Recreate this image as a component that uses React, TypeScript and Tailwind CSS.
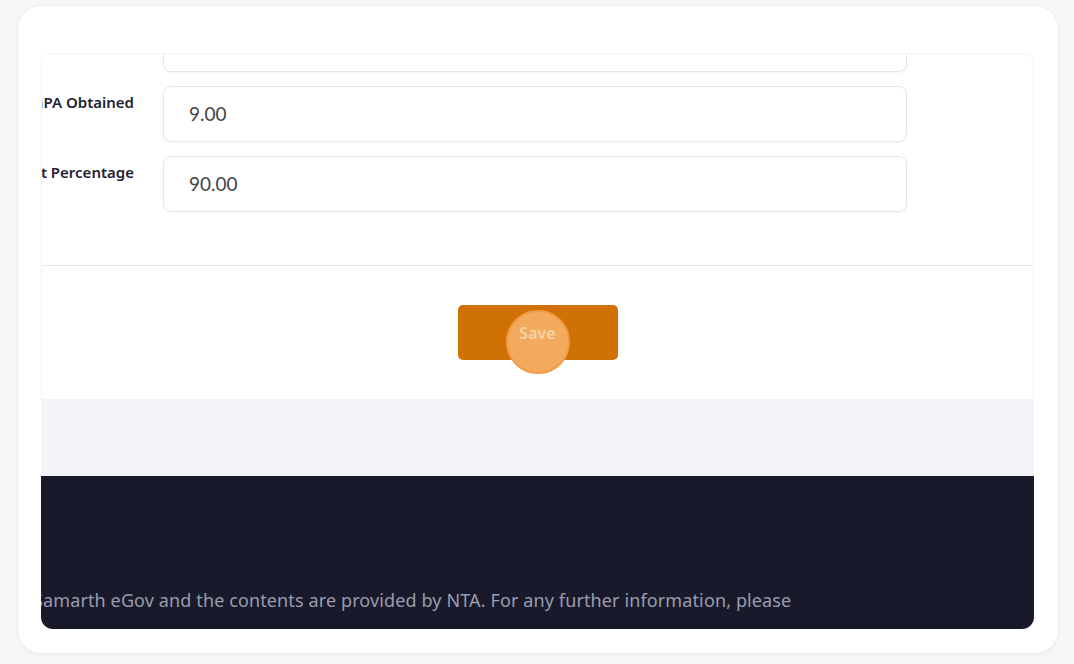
import React from "react";

type Field = {
  label: string;
  value: string;
};

const fields: Field[] = [
  { label: "Result Status", value: "" },
  { label: "CGPA Obtained", value: "9.00" },
  { label: "Equivalent Percentage", value: "90.00" },
];

export default function App() {
  return (
    <div className="h-[664px] w-full bg-[#f5f6f8] pl-[17px] pr-[15px] pt-[5px] pb-[10px] font-['Noto_Sans',sans-serif]">
      <div className="flex h-full flex-col rounded-[24px] border border-[#eceef1] bg-white pt-[47px] pb-[24px] pl-[23px] pr-[24px] shadow-[0_1px_2px_rgba(0,0,0,0.04)]">
        <div className="flex flex-1 flex-col overflow-hidden rounded-t-[10px] rounded-b-[12px]">
          {/* form card */}
          <div className="flex h-[347px] flex-col overflow-hidden rounded-t-[10px] border border-[#f1f2f4] bg-white shadow-[0_2px_3px_rgba(0,0,0,0.05)]">
            <div className="-mt-[38px] flex flex-col gap-[14px]">
              {fields.map((f) => (
                <div key={f.label} className="flex items-start">
                  <div className="flex w-[92px] shrink-0 justify-end pt-[5px]">
                    <span className="whitespace-nowrap text-[15px] font-semibold text-[#1f2230]">
                      {f.label}
                    </span>
                  </div>
                  <div className="ml-[29px] flex h-[56px] w-[744px] items-center rounded-[8px] border border-[#e6e7ea] bg-white px-[25px] shadow-[0_1px_2px_rgba(0,0,0,0.04)]">
                    <span className="font-['Lato',sans-serif] text-[19px] text-[#444444]">
                      {f.value}
                    </span>
                  </div>
                </div>
              ))}
            </div>
            <div className="mt-[53px] border-t border-[#e8e9ec]" />
            <div className="flex justify-center pt-[39px]">
              <button className="relative flex h-[55px] w-[160px] items-start justify-center rounded-[5px] bg-[#cf7104] pt-[16px] text-[16px] font-semibold text-[#f8d2a6]">
                <span className="absolute left-1/2 top-[5px] h-[64px] w-[64px] -translate-x-1/2 rounded-full border-2 border-[#f39a44] bg-[#f2aa5e]" />
                <span className="relative">Save</span>
              </button>
            </div>
          </div>
          {/* gray band */}
          <div className="h-[76px] shrink-0 bg-[#f3f4f8]" />
          {/* footer */}
          <div className="flex flex-1 items-end bg-[#181a2b] pb-[15px]">
            <p className="-ml-[8px] whitespace-nowrap text-[18px] tracking-[0.12px] text-[#9a9cae]">
              Samarth eGov and the contents are provided by NTA. For any further information, please
            </p>
          </div>
        </div>
      </div>
    </div>
  );
}
